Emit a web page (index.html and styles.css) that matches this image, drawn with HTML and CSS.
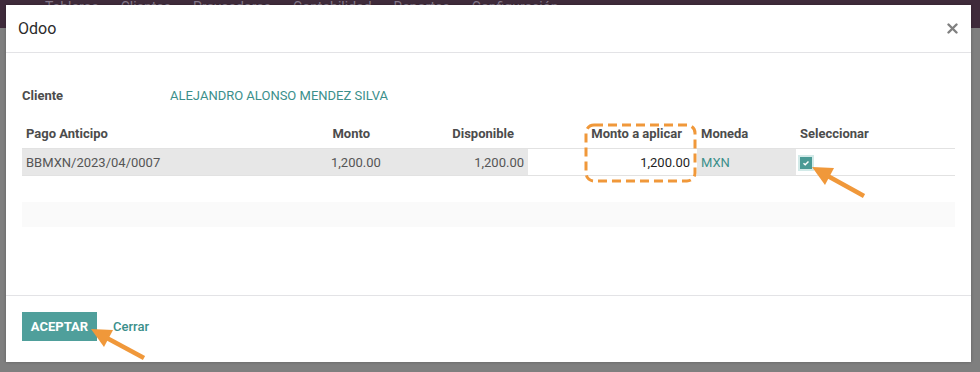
FILE: index.html
```html
<!DOCTYPE html>
<html lang="es">
<head>
  <meta charset="UTF-8">
  <meta name="viewport" content="width=device-width, initial-scale=1.0">
  <title>Odoo - Aplicar anticipo</title>
  <link rel="stylesheet" href="styles.css">
</head>
<body>

<!-- Page behind the dialog (only the navbar edge shows) -->
<div class="backdrop">
  <nav class="topnav">
    <span>Tableros</span>
    <span>Clientes</span>
    <span>Proveedores</span>
    <span>Contabilidad</span>
    <span>Reportes</span>
    <span>Configuración</span>
  </nav>
</div>

<div class="modal">
  <header class="modal-header">
    <h4 class="modal-title">Odoo</h4>
    <button class="close" aria-label="Cerrar">
      <svg width="11" height="11" viewBox="0 0 11 11"><path d="M1.5 1.5l8 8M9.5 1.5l-8 8" stroke="#808080" stroke-width="2.4" stroke-linecap="round"/></svg>
    </button>
  </header>

  <div class="modal-body">
    <div class="field-row">
      <span class="field-label">Cliente</span>
      <a class="field-value">ALEJANDRO ALONSO MENDEZ SILVA</a>
    </div>

    <!-- Advance payments list -->
    <table class="lines">
      <colgroup>
        <col style="width:305px">
        <col style="width:57px">
        <col style="width:144px">
        <col style="width:169px">
        <col style="width:99px">
        <col style="width:159px">
      </colgroup>
      <thead>
        <tr>
          <th>Pago Anticipo</th>
          <th class="num">Monto</th>
          <th class="num">Disponible</th>
          <th class="num apply">Monto a aplicar</th>
          <th>Moneda</th>
          <th>Seleccionar</th>
        </tr>
      </thead>
      <tbody>
        <tr class="line">
          <td>BBMXN/2023/04/0007</td>
          <td class="num">1,200.00</td>
          <td class="num">1,200.00</td>
          <td class="num editable apply">1,200.00</td>
          <td><a class="link">MXN</a></td>
          <td class="editable"><span class="checkbox"><svg width="8" height="8" viewBox="0 0 8 8"><path d="M1.5 4.2l1.7 1.6 3.3-3.4" fill="none" stroke="#fff" stroke-width="1.4"/></svg></span></td>
        </tr>
      </tbody>
    </table>
    <div class="list-footer"></div>
  </div>

  <footer class="modal-footer">
    <button class="btn-primary">ACEPTAR</button>
    <a class="btn-link">Cerrar</a>
  </footer>
</div>

<!-- Orange marks drawn over the screenshot -->
<svg class="annotations" width="980" height="372" viewBox="0 0 980 372">
  <rect x="586" y="125" width="109" height="56" rx="8" fill="none" stroke="#f0983a" stroke-width="3" stroke-dasharray="9 5"/>
  <line x1="864" y1="196" x2="826" y2="175" stroke="#f0983a" stroke-width="4.5"/>
  <polygon points="812,167 834,168 825,185" fill="#f0983a"/>
  <line x1="144" y1="358" x2="105" y2="337" stroke="#f0983a" stroke-width="4.5"/>
  <polygon points="91,329 113,330 104,347" fill="#f0983a"/>
</svg>

</body>
</html>
```

FILE: styles.css
```css
body {
  margin: 0;
  padding: 5px 0 0 6px;
  height: 372px;
  box-sizing: border-box;
  overflow: hidden;
  font-family: Roboto, "Liberation Sans", Arial, sans-serif;
  font-size: 13px;
  color: #4c4c4c;
  background-color: #7f7f7f;
}
.backdrop {
  position: absolute;
  top: 0;
  left: 0;
  width: 980px;
  z-index: 0;
}
.topnav {
  height: 28px;
  background-color: #3f2b3b;
  display: flex;
  gap: 22px;
  padding-left: 45px;
  font-size: 14px;
  line-height: 14px;
  color: #85798a;
  margin-top: -8px;
  padding-top: 8px;
}
.modal {
  position: relative;
  z-index: 1;
  width: 965px;
  height: 357px;
  background-color: #fff;
  box-shadow: 0 0 3px rgba(0, 0, 0, 0.25);
  display: flex;
  flex-direction: column;
}
.modal-header {
  height: 47px;
  border-bottom: 1px solid #e3e3e6;
  display: flex;
  align-items: center;
  justify-content: space-between;
  padding: 0 12px 0 12px;
}
.modal-title {
  margin: 0;
  font-size: 16px;
  font-weight: 400;
  color: #2b2b2b;
}
.close {
  border: none;
  background: none;
  padding: 0;
  display: flex;
  margin-right: 1px;
}
.modal-body {
  padding: 32px 16px 0 16px;
  flex: 1;
}
.field-row {
  display: flex;
  height: 20px;
  align-items: center;
  margin-bottom: 14px;
}
.field-label {
  width: 148px;
  font-weight: 700;
  color: #4c4c4c;
}
.field-value {
  color: #3b8f8b;
}
.lines {
  width: 933px;
  border-collapse: collapse;
  table-layout: fixed;
}
.lines th {
  height: 29px;
  padding: 0 4px;
  text-align: left;
  font-weight: 700;
  color: #4c4c4c;
  white-space: nowrap;
}
.lines th.num {
  text-align: right;
  padding-right: 14px;
}
.lines th.apply {
  padding-right: 15px;
}
.lines td {
  height: 26px;
  padding: 0 4px;
  background-color: #e7e7e7;
  border-top: 1px solid #e2e2e2;
  border-bottom: 1px solid #e2e2e2;
  color: #555;
  white-space: nowrap;
}
.lines td.num {
  text-align: right;
}
.lines td.editable {
  background-color: #fff;
}
.lines td.apply {
  padding-right: 7px;
  color: #1f1f1f;
}
.link {
  color: #3b8f8b;
}
.checkbox {
  display: inline-flex;
  align-items: center;
  justify-content: center;
  width: 12px;
  height: 12px;
  margin-top: 3px;
  background-color: #4a9a95;
  box-shadow: 0 0 0 2px #d2eae8;
}
.list-footer {
  margin-top: 26px;
  height: 25px;
  width: 933px;
  background-color: #fafafa;
}
.modal-footer {
  border-top: 1px solid #e3e3e6;
  height: 67px;
  padding: 16px 16px 0 16px;
  box-sizing: border-box;
  display: flex;
  align-items: flex-start;
  gap: 16px;
}
.btn-primary {
  width: 75px;
  height: 29px;
  border: none;
  background-color: #4f9f9b;
  color: #fff;
  font-family: inherit;
  font-size: 13px;
  font-weight: 700;
  padding: 0;
}
.btn-link {
  line-height: 29px;
  color: #3b8f8b;
  font-weight: 500;
}
.annotations {
  position: absolute;
  top: 0;
  left: 0;
  z-index: 2;
  pointer-events: none;
}
```
